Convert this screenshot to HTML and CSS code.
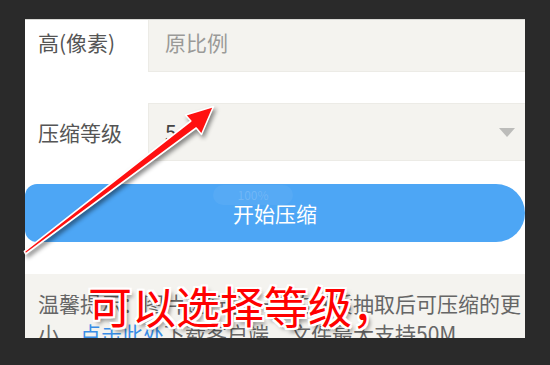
FILE: index.html
```html
<!DOCTYPE html>
<html lang="zh-CN">
<head>
    <meta charset="UTF-8">
    <meta name="viewport" content="width=device-width, initial-scale=1.0">
    <title>图片压缩</title>
    <link rel="stylesheet" href="styles.css">
</head>
<body>
    <div class="panel">
        <div class="form-row row-height">
            <label class="row-label">高(像素)</label>
            <div class="field placeholder">原比例</div>
        </div>

        <div class="form-row row-level">
            <label class="row-label">压缩等级</label>
            <div class="field select">
                <span class="select-value">5</span>
                <span class="caret"></span>
            </div>
        </div>

        <button class="btn-start">
            <span class="progress-ghost">100%</span>
            开始压缩
        </button>

        <div class="tips">
            温馨提示：图片进行了一定的画质抽取后可压缩的更小，<a href="#" class="tips-link">点击此处</a>下载客户端，文件最大支持50M
        </div>
    </div>

    <svg class="arrow" width="550" height="365" viewBox="0 0 550 365">
        <polygon points="25.6,254 196.2,128 201.5,134.5 213.5,106.5 185.5,115 190.8,121 24.4,251.4"
                 fill="#ff1010" stroke="#fff" stroke-width="1.6" stroke-linejoin="round"/>
    </svg>

    <div class="caption">可以选择等级，</div>
</body>
</html>
```

FILE: styles.css
```css
body {
    margin: 0;
    padding: 19px 25px 27px;
    background: #2a2a2a;
    font-family: "Noto Sans CJK SC", "Noto Sans", sans-serif;
    position: relative;
    height: 319px;
}
.panel {
    width: 500px;
    height: 319px;
    background: #fff;
    overflow: hidden;
    border-top: 1px solid #d8d8d4;
    box-sizing: border-box;
}
.form-row {
    display: flex;
    align-items: stretch;
}
.row-height {
    height: 52px;
}
.row-height .row-label,
.row-height .field {
    padding-bottom: 8px;
}
.row-level {
    height: 58px;
    margin-top: 31px;
}
.row-label {
    width: 110px;
    padding-left: 13px;
    display: flex;
    align-items: center;
    font-size: 21px;
    color: #555;
}
.field {
    flex: 1;
    background: #f4f3ef;
    border: 1px solid #ecebe6;
    border-right: none;
    display: flex;
    align-items: center;
    padding-left: 16px;
    font-size: 21px;
}
.row-height .field {
    border-top: none;
}
.placeholder {
    color: #9a9a98;
}
.select {
    justify-content: space-between;
    padding-right: 10px;
}
.select-value {
    color: #444;
}
.caret {
    width: 0;
    height: 0;
    border-left: 8px solid transparent;
    border-right: 8px solid transparent;
    border-top: 9px solid #bcbcba;
}
.btn-start {
    position: relative;
    display: block;
    width: 100%;
    height: 58px;
    margin-top: 23px;
    border: none;
    border-radius: 12px 29px 29px 12px;
    background: #4da6f5;
    color: #fff;
    font-family: inherit;
    font-size: 21px;
    padding: 0;
}
.progress-ghost {
    position: absolute;
    left: 188px;
    top: 1px;
    width: 80px;
    height: 20px;
    border-radius: 10px;
    background: rgba(255, 255, 255, 0.05);
    color: rgba(255, 255, 255, 0.16);
    font-size: 12px;
    line-height: 20px;
}
.tips {
    margin-top: 32px;
    height: 80px;
    background: #f4f3ef;
    padding: 14px 0 0 13px;
    font-size: 21px;
    line-height: 30px;
    color: #666;
    word-break: break-all;
}
.tips-link {
    color: #3a8ee6;
    text-decoration: none;
}
.arrow {
    position: absolute;
    left: 0;
    top: 0;
    filter: drop-shadow(2px 3px 2px rgba(0, 0, 0, 0.45));
}
.caption {
    position: absolute;
    left: 88px;
    top: 279px;
    font-size: 44px;
    line-height: 52px;
    color: #ff0000;
    white-space: nowrap;
    text-shadow:
        2px 0 0 #fff, -2px 0 0 #fff, 0 2px 0 #fff, 0 -2px 0 #fff,
        2px 2px 0 #fff, -2px -2px 0 #fff, 2px -2px 0 #fff, -2px 2px 0 #fff,
        3px 4px 4px rgba(0, 0, 0, 0.5);
}
```
